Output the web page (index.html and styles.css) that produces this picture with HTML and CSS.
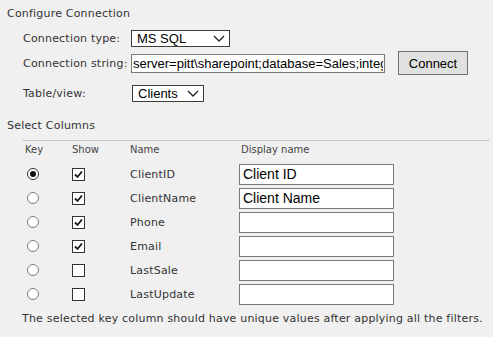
FILE: index.html
```html
<!DOCTYPE html>
<html lang="en">
<head>
  <meta charset="UTF-8">
  <title>Configure Connection</title>
  <link rel="stylesheet" href="styles.css">
</head>
<body>
  <div class="section-title">Configure Connection</div>
  <div class="config">
    <div class="config-row row-type">
      <label class="config-label">Connection type:</label>
      <div class="select select-type">
        <select><option>MS SQL</option></select>
        <svg class="chevron" width="12" height="7" viewBox="0 0 12 7"><path d="M1 1 L6 6 L11 1" fill="none" stroke="#222" stroke-width="1.3"/></svg>
      </div>
    </div>
    <div class="config-row row-string">
      <label class="config-label">Connection string:</label>
      <input class="text-input conn-input" type="text" value="server=pitt\sharepoint;database=Sales;integrated security=true">
      <button class="btn">Connect</button>
    </div>
    <div class="config-row row-table">
      <label class="config-label">Table/view:</label>
      <div class="select select-table">
        <select><option>Clients</option></select>
        <svg class="chevron" width="12" height="7" viewBox="0 0 12 7"><path d="M1 1 L6 6 L11 1" fill="none" stroke="#222" stroke-width="1.3"/></svg>
      </div>
    </div>
  </div>

  <div class="section-title cols-title">Select Columns</div>
  <div class="columns">
    <div class="col-row col-head">
      <span class="c-key">Key</span>
      <span class="c-show">Show</span>
      <span class="c-name">Name</span>
      <span class="c-disp">Display name</span>
    </div>
    <div class="col-row">
      <span class="c-key"><span class="radio on"></span></span>
      <span class="c-show"><span class="check"><svg width="11" height="11" viewBox="0 0 11 11"><path d="M2 5.5 L4.5 8 L9 2.5" fill="none" stroke="#111" stroke-width="1.8"/></svg></span></span>
      <span class="c-name">ClientID</span>
      <span class="c-disp"><input class="text-input disp-input" type="text" value="Client ID"></span>
    </div>
    <div class="col-row">
      <span class="c-key"><span class="radio"></span></span>
      <span class="c-show"><span class="check"><svg width="11" height="11" viewBox="0 0 11 11"><path d="M2 5.5 L4.5 8 L9 2.5" fill="none" stroke="#111" stroke-width="1.8"/></svg></span></span>
      <span class="c-name">ClientName</span>
      <span class="c-disp"><input class="text-input disp-input" type="text" value="Client Name"></span>
    </div>
    <div class="col-row">
      <span class="c-key"><span class="radio"></span></span>
      <span class="c-show"><span class="check"><svg width="11" height="11" viewBox="0 0 11 11"><path d="M2 5.5 L4.5 8 L9 2.5" fill="none" stroke="#111" stroke-width="1.8"/></svg></span></span>
      <span class="c-name">Phone</span>
      <span class="c-disp"><input class="text-input disp-input" type="text" value=""></span>
    </div>
    <div class="col-row">
      <span class="c-key"><span class="radio"></span></span>
      <span class="c-show"><span class="check"><svg width="11" height="11" viewBox="0 0 11 11"><path d="M2 5.5 L4.5 8 L9 2.5" fill="none" stroke="#111" stroke-width="1.8"/></svg></span></span>
      <span class="c-name">Email</span>
      <span class="c-disp"><input class="text-input disp-input" type="text" value=""></span>
    </div>
    <div class="col-row">
      <span class="c-key"><span class="radio"></span></span>
      <span class="c-show"><span class="check"></span></span>
      <span class="c-name">LastSale</span>
      <span class="c-disp"><input class="text-input disp-input" type="text" value=""></span>
    </div>
    <div class="col-row">
      <span class="c-key"><span class="radio"></span></span>
      <span class="c-show"><span class="check"></span></span>
      <span class="c-name">LastUpdate</span>
      <span class="c-disp"><input class="text-input disp-input" type="text" value=""></span>
    </div>
  </div>
  <p class="note">The selected key column should have unique values after applying all the filters.</p>
</body>
</html>
```

FILE: styles.css
```css
body {
  margin: 0;
  padding: 6px 3px 0 7px;
  background: #f0f0f0;
  color: #333;
  font-family: "DejaVu Sans", Verdana, sans-serif;
  font-size: 11px;
  letter-spacing: 0.2px;
}
.section-title {
  height: 16px;
  line-height: 16px;
}
.config {
  margin: 8px 0 0 16px;
}
.config-row {
  display: flex;
  align-items: center;
}
.config-label {
  width: 108px;
}
.row-type {
  height: 17px;
}
.row-string {
  height: 24px;
  margin-top: 4px;
}
.row-table {
  height: 17px;
  margin-top: 10px;
}
.select {
  position: relative;
  height: 17px;
}
.select select {
  appearance: none;
  -webkit-appearance: none;
  height: 17px;
  margin: 0;
  padding: 0 0 0 5px;
  border: 1px solid #3c3c3c;
  border-radius: 0;
  background: #fff;
  color: #000;
  font-family: "Liberation Sans", Arial, sans-serif;
  font-size: 13px;
  letter-spacing: 0;
  box-sizing: border-box;
}
.select-type select {
  width: 99px;
}
.select-table {
  margin-left: 1px;
}
.select-table select {
  width: 72px;
}
.chevron {
  position: absolute;
  right: 5px;
  top: 5px;
  pointer-events: none;
}
.text-input {
  margin: 0;
  border: 1px solid #7a7a7a;
  border-radius: 0;
  background: #fff;
  color: #000;
  font-family: "Liberation Sans", Arial, sans-serif;
  letter-spacing: 0;
  box-sizing: border-box;
  outline: none;
}
.conn-input {
  width: 254px;
  height: 19px;
  padding: 0 1px;
  font-size: 13px;
}
.btn {
  margin-left: 13px;
  width: 70px;
  height: 24px;
  padding: 0;
  border: 1px solid #707070;
  background: #e1e1e1;
  color: #000;
  font-family: "Liberation Sans", Arial, sans-serif;
  font-size: 13px;
  letter-spacing: 0;
}
.cols-title {
  margin-top: 16px;
}
.columns {
  margin: 6px 0 0 15px;
  border-top: 1px solid #c3cad3;
}
.col-row {
  display: grid;
  grid-template-columns: 50px 58px 109px 1fr;
  align-items: center;
  height: 24px;
}
.col-head {
  height: 21px;
  font-size: 10px;
  letter-spacing: 0;
  color: #444;
  align-items: start;
  line-height: 18px;
}
.c-key {
  padding-left: 3px;
}
.col-row .c-disp {
  padding-left: 2px;
}
.col-row:not(.col-head) .c-disp {
  padding-left: 0;
  display: flex;
}
.radio {
  display: block;
  width: 12px;
  height: 12px;
  margin-left: 2px;
  border: 1px solid #7a7a7a;
  border-radius: 50%;
  background: #fff;
  box-sizing: border-box;
  position: relative;
}
.radio.on {
  border-color: #333;
}
.radio.on::after {
  content: "";
  position: absolute;
  left: 2px;
  top: 2px;
  width: 6px;
  height: 6px;
  border-radius: 50%;
  background: #111;
}
.check {
  display: flex;
  align-items: center;
  justify-content: center;
  width: 13px;
  height: 13px;
  border: 1px solid #333;
  background: #fff;
  box-sizing: border-box;
}
.disp-input {
  width: 155px;
  height: 21px;
  padding: 0 3px;
  font-size: 14px;
}
.note {
  margin: 5px 0 0 15px;
  line-height: 16px;
}
```
